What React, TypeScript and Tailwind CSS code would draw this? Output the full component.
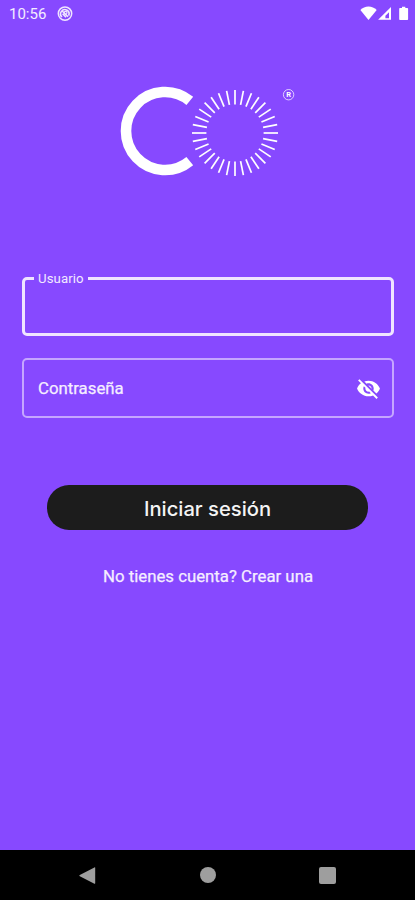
const TICKS = Array.from({ length: 32 }, (_, i) => i * 11.25);

function StatusBar() {
  return (
    <header className="flex h-7 shrink-0 items-center justify-between pl-[9px] pr-[6px]">
      <div className="flex items-center gap-[11px]">
        <span className="text-[15px] leading-7 text-white/90">10:56</span>
        <svg className="size-4" viewBox="0 0 16 16" fill="none" stroke="#f0e6ff">
          <circle cx="8" cy="7.6" r="6.7" strokeWidth="1.5" />
          <path d="M5 11a4.2 4.2 0 1 1 6.6-1.3M5.2 5l5.8 5.8M5.6 7.8l3.4 3.4" strokeWidth="1.6" />
          <circle cx="8.6" cy="6.8" r="1.4" strokeWidth="1.1" />
        </svg>
      </div>
      <svg className="h-4 w-[50px]" viewBox="0 0 50 16" fill="#fff">
        <path d="M1.4 4.1C5.5-.6 13.5-.6 17.7 4.1L9.5 14z" />
        <path d="M32 1v12.7H19.1zM30 6.2l-3.6 3.6v2.4H30z" fillRule="evenodd" />
        <path d="M41 2h2V.7h3.3V2h2a.8.8 0 0 1 .8.8v10.4a.8.8 0 0 1-.8.8H41a.8.8 0 0 1-.8-.8V2.8A.8.8 0 0 1 41 2z" />
      </svg>
    </header>
  );
}

function Logo() {
  return (
    <svg className="mx-auto h-[100px] w-[180px] shrink-0" viewBox="118 80 180 100" fill="none" stroke="#fff">
      <path d="M189.8 100.9A39 39 0 1 0 189.8 161.1" strokeWidth="10.6" />
      {TICKS.map((angle) => (
        <path key={angle} d="M235 90v14.4" strokeWidth="1.7" transform={`rotate(${angle} 235 133)`} />
      ))}
      <circle cx="288.6" cy="94.7" r="5.2" strokeWidth="0.9" strokeOpacity="0.8" />
      <text x="288.7" y="97.4" textAnchor="middle" fontSize="7.5" fontWeight="700" fill="#fff" stroke="none">
        R
      </text>
    </svg>
  );
}

function VisibilityOff() {
  return (
    <svg className="size-[25px]" viewBox="0 0 24 24" fill="#fff">
      <path d="M12 7c2.76 0 5 2.24 5 5 0 .65-.13 1.26-.36 1.83l2.92 2.92c1.51-1.26 2.7-2.89 3.43-4.75-1.73-4.39-6-7.5-11-7.5-1.4 0-2.74.25-3.98.7l2.16 2.16C10.74 7.13 11.35 7 12 7zM2 4.27l2.28 2.28.46.46C3.08 8.3 1.78 10.02 1 12c1.73 4.39 6 7.5 11 7.5 1.55 0 3.03-.3 4.38-.84l.42.42L19.73 22 21 20.73 3.27 3 2 4.27zM7.53 9.8l1.55 1.55c-.05.21-.08.43-.08.65 0 1.66 1.34 3 3 3 .22 0 .44-.03.65-.08l1.55 1.55c-.67.33-1.41.53-2.2.53-2.76 0-5-2.24-5-5 0-.79.2-1.53.53-2.2zm4.31-.78l3.15 3.15.02-.16c0-1.66-1.34-3-3-3l-.17.01z" />
    </svg>
  );
}

function NavigationBar() {
  return (
    <nav className="flex h-[50px] shrink-0 items-center justify-between bg-black px-[79px]">
      <svg className="size-[17px]" viewBox="0 0 17 17" fill="#9e9e9e">
        <path d="M16.2 0.9v15.4a.5.5 0 0 1-.8.4L.8 9.2a.7.7 0 0 1 0-1.2L15.4 .4a.5.5 0 0 1 .8.5z" />
      </svg>
      <div className="size-4 rounded-full bg-[#9e9e9e]" />
      <div className="size-[17px] rounded-[2px] bg-[#9e9e9e]" />
    </nav>
  );
}

export default function App() {
  return (
    <div className="flex h-[900px] w-[415px] flex-col overflow-hidden bg-[#8749ff] font-['Roboto',sans-serif] text-white">
      <StatusBar />
      <main className="flex flex-1 flex-col pt-[52px]">
        <Logo />
        <form className="mt-[90px] flex flex-col pl-[22px] pr-[21px]">
          <fieldset className="h-[66px] rounded-[5px] border-3 border-[#efe4ff] pl-[9px]">
            <legend className="px-[4px] text-[13.2px] leading-[17px] tracking-[0.1px] text-[#f2e9ff]">Usuario</legend>
          </fieldset>
          <div className="mt-[22px] flex h-[60px] items-center justify-between rounded-[5px] border-2 border-[#c5a6ff] pl-[14px] pr-[11px]">
            <span className="pt-px text-[16.8px] text-[#f5eeff] [-webkit-text-stroke:0.25px_#f5eeff]">Contraseña</span>
            <VisibilityOff />
          </div>
          <button
            type="button"
            className="ml-[25px] mr-[26px] mt-[67px] h-[45px] rounded-[22px] bg-[#1c1c1c] pt-[3px] font-['Inter',sans-serif] text-[20.2px] font-medium text-[#f4f4f4]"
          >
            Iniciar sesión
          </button>
        </form>
        <p className="mt-[34px] pl-px text-center text-[16.8px] leading-6 text-[#f5eeff] [-webkit-text-stroke:0.25px_#f5eeff]">
          No tienes cuenta? Crear una
        </p>
      </main>
      <NavigationBar />
    </div>
  );
}
